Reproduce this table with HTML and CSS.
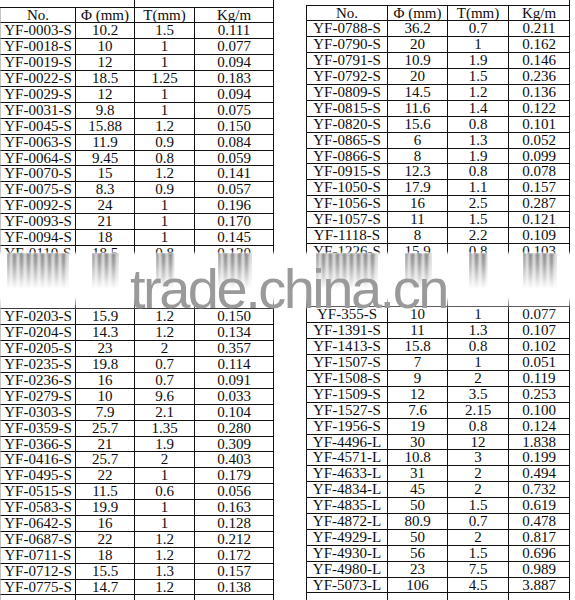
FILE: index.html
```html
<!DOCTYPE html>
<html lang="en">
<head>
<meta charset="utf-8">
<title>YF sizes</title>
<link rel="stylesheet" href="styles.css">
</head>
<body>
<div class="page">
  <div class="sheet left">
    <div class="stub s2"></div><div class="stub s2"></div>
    <div>No.</div><div>Φ (mm)</div><div>T(mm)</div><div>Kg/m</div>
    <div>YF-0003-S</div><div>10.2</div><div>1.5</div><div>0.111</div>
    <div>YF-0018-S</div><div>10</div><div>1</div><div>0.077</div>
    <div>YF-0019-S</div><div>12</div><div>1</div><div>0.094</div>
    <div>YF-0022-S</div><div>18.5</div><div>1.25</div><div>0.183</div>
    <div>YF-0029-S</div><div>12</div><div>1</div><div>0.094</div>
    <div>YF-0031-S</div><div>9.8</div><div>1</div><div>0.075</div>
    <div>YF-0045-S</div><div>15.88</div><div>1.2</div><div>0.150</div>
    <div>YF-0063-S</div><div>11.9</div><div>0.9</div><div>0.084</div>
    <div>YF-0064-S</div><div>9.45</div><div>0.8</div><div>0.059</div>
    <div>YF-0070-S</div><div>15</div><div>1.2</div><div>0.141</div>
    <div>YF-0075-S</div><div>8.3</div><div>0.9</div><div>0.057</div>
    <div>YF-0092-S</div><div>24</div><div>1</div><div>0.196</div>
    <div>YF-0093-S</div><div>21</div><div>1</div><div>0.170</div>
    <div>YF-0094-S</div><div>18</div><div>1</div><div>0.145</div>
    <div>YF-0110-S</div><div>18.5</div><div>0.8</div><div>0.120</div>
    <div></div><div></div><div></div><div></div>
    <div></div><div></div><div></div><div></div>
    <div></div><div></div><div></div><div></div>
    <div>YF-0203-S</div><div>15.9</div><div>1.2</div><div>0.150</div>
    <div>YF-0204-S</div><div>14.3</div><div>1.2</div><div>0.134</div>
    <div>YF-0205-S</div><div>23</div><div>2</div><div>0.357</div>
    <div>YF-0235-S</div><div>19.8</div><div>0.7</div><div>0.114</div>
    <div>YF-0236-S</div><div>16</div><div>0.7</div><div>0.091</div>
    <div>YF-0279-S</div><div>10</div><div>9.6</div><div>0.033</div>
    <div>YF-0303-S</div><div>7.9</div><div>2.1</div><div>0.104</div>
    <div>YF-0359-S</div><div>25.7</div><div>1.35</div><div>0.280</div>
    <div>YF-0366-S</div><div>21</div><div>1.9</div><div>0.309</div>
    <div>YF-0416-S</div><div>25.7</div><div>2</div><div>0.403</div>
    <div>YF-0495-S</div><div>22</div><div>1</div><div>0.179</div>
    <div>YF-0515-S</div><div>11.5</div><div>0.6</div><div>0.056</div>
    <div>YF-0583-S</div><div>19.9</div><div>1</div><div>0.163</div>
    <div>YF-0642-S</div><div>16</div><div>1</div><div>0.128</div>
    <div>YF-0687-S</div><div>22</div><div>1.2</div><div>0.212</div>
    <div>YF-0711-S</div><div>18</div><div>1.2</div><div>0.172</div>
    <div>YF-0712-S</div><div>15.5</div><div>1.3</div><div>0.157</div>
    <div>YF-0775-S</div><div>14.7</div><div>1.2</div><div>0.138</div>
    <div></div><div></div><div></div><div></div>
  </div>
  <div class="sheet right">
    <div class="stub s4"></div>
    <div>No.</div><div>Φ (mm)</div><div>T(mm)</div><div>Kg/m</div>
    <div>YF-0788-S</div><div>36.2</div><div>0.7</div><div>0.211</div>
    <div>YF-0790-S</div><div>20</div><div>1</div><div>0.162</div>
    <div>YF-0791-S</div><div>10.9</div><div>1.9</div><div>0.146</div>
    <div>YF-0792-S</div><div>20</div><div>1.5</div><div>0.236</div>
    <div>YF-0809-S</div><div>14.5</div><div>1.2</div><div>0.136</div>
    <div>YF-0815-S</div><div>11.6</div><div>1.4</div><div>0.122</div>
    <div>YF-0820-S</div><div>15.6</div><div>0.8</div><div>0.101</div>
    <div>YF-0865-S</div><div>6</div><div>1.3</div><div>0.052</div>
    <div>YF-0866-S</div><div>8</div><div>1.9</div><div>0.099</div>
    <div>YF-0915-S</div><div>12.3</div><div>0.8</div><div>0.078</div>
    <div>YF-1050-S</div><div>17.9</div><div>1.1</div><div>0.157</div>
    <div>YF-1056-S</div><div>16</div><div>2.5</div><div>0.287</div>
    <div>YF-1057-S</div><div>11</div><div>1.5</div><div>0.121</div>
    <div>YF-1118-S</div><div>8</div><div>2.2</div><div>0.109</div>
    <div>YF-1226-S</div><div>15.9</div><div>0.8</div><div>0.103</div>
    <div></div><div></div><div></div><div></div>
    <div></div><div></div><div></div><div></div>
    <div></div><div></div><div></div><div></div>
    <div>YF-355-S</div><div>10</div><div>1</div><div>0.077</div>
    <div>YF-1391-S</div><div>11</div><div>1.3</div><div>0.107</div>
    <div>YF-1413-S</div><div>15.8</div><div>0.8</div><div>0.102</div>
    <div>YF-1507-S</div><div>7</div><div>1</div><div>0.051</div>
    <div>YF-1508-S</div><div>9</div><div>2</div><div>0.119</div>
    <div>YF-1509-S</div><div>12</div><div>3.5</div><div>0.253</div>
    <div>YF-1527-S</div><div>7.6</div><div>2.15</div><div>0.100</div>
    <div>YF-1956-S</div><div>19</div><div>0.8</div><div>0.124</div>
    <div>YF-4496-L</div><div>30</div><div>12</div><div>1.838</div>
    <div>YF-4571-L</div><div>10.8</div><div>3</div><div>0.199</div>
    <div>YF-4633-L</div><div>31</div><div>2</div><div>0.494</div>
    <div>YF-4834-L</div><div>45</div><div>2</div><div>0.732</div>
    <div>YF-4835-L</div><div>50</div><div>1.5</div><div>0.619</div>
    <div>YF-4872-L</div><div>80.9</div><div>0.7</div><div>0.478</div>
    <div>YF-4929-L</div><div>50</div><div>2</div><div>0.817</div>
    <div>YF-4930-L</div><div>56</div><div>1.5</div><div>0.696</div>
    <div>YF-4980-L</div><div>23</div><div>7.5</div><div>0.989</div>
    <div>YF-5073-L</div><div>106</div><div>4.5</div><div>3.887</div>
    <div></div><div></div><div></div><div></div>
  </div>
</div>

<div class="band">
  <div class="smear">
    <div class="smear-row left-cols">
      <i class="st w-id"></i><i class="st w-4"></i><i class="st w-3"></i><i class="st w-5"></i>
    </div>
    <div class="smear-row right-cols">
      <i class="st w-id"></i><i class="st w-4"></i><i class="st w-3"></i><i class="st w-5"></i>
    </div>
  </div>
</div>
<div class="mark">trade.china.cn</div>
</body>
</html>
```

FILE: styles.css
```css
* {
  box-sizing: border-box;
}

html,
body {
  margin: 0;
  height: 600px;
  overflow: hidden;
  background: #fff;
}

body {
  position: relative;
  font-family: "Liberation Serif", "Times New Roman", serif;
  font-size: 15px;
  color: #0d0d0d;
}

.page {
  display: flex;
  align-items: flex-start;
  gap: 32px;
}

.sheet {
  display: grid;
  grid-auto-rows: 15.9px;
}

.left,
.left-cols {
  grid-template-columns: 76px 59px 60px 79px;
}

.right,
.right-cols {
  grid-template-columns: 82px 60px 61px 61px;
}

.left {
  grid-template-rows: 7.5px;
}

.right {
  grid-template-rows: 5.5px;
}

.sheet > div {
  border-right: 1px solid #111;
  border-bottom: 1px solid #111;
  text-align: center;
  line-height: 14px;
  white-space: nowrap;
}

.left > div:nth-child(4n+3) {
  border-left: 1px solid #c4c4c4;
}

.right > div:nth-child(4n+2) {
  border-left: 1px solid #111;
}

.s2 {
  grid-column: span 2;
}

.s4 {
  grid-column: span 4;
}

/* blurred band hiding rows 16-18 */
.band {
  position: absolute;
  left: 0;
  top: 251px;
  width: 575px;
  height: 60px;
  background: linear-gradient(to bottom,
    rgba(255, 255, 255, 0) 0,
    rgba(255, 255, 255, 0.9) 3px,
    #fff 6px,
    #fff 46px,
    rgba(255, 255, 255, 0) 60px);
}

.smear {
  display: flex;
  gap: 32px;
  padding-top: 2px;
}

.smear-row {
  display: grid;
  align-items: start;
}

.st {
  display: block;
  justify-self: center;
  height: 36px;
  background: repeating-linear-gradient(90deg,
    rgba(70, 70, 70, 0.75) 0 2px,
    rgba(150, 150, 150, 0.25) 3px 5px,
    rgba(70, 70, 70, 0.75) 6px 7px);
  filter: blur(1.2px);
  -webkit-mask-image: linear-gradient(to bottom, rgba(0, 0, 0, 0.9) 0, rgba(0, 0, 0, 0.7) 30%, transparent 100%);
  mask-image: linear-gradient(to bottom, rgba(0, 0, 0, 0.9) 0, rgba(0, 0, 0, 0.7) 30%, transparent 100%);
}

.w-id {
  width: 62px;
}

.w-5 {
  width: 34px;
}

.w-4 {
  width: 27px;
}

.w-3 {
  width: 19px;
}

.mark {
  position: absolute;
  left: 130px;
  top: 269px;
  font-family: "Liberation Sans", Arial, sans-serif;
  font-size: 56px;
  line-height: 40px;
  letter-spacing: -2.5px;
  color: #9a9a9a;
}
```
